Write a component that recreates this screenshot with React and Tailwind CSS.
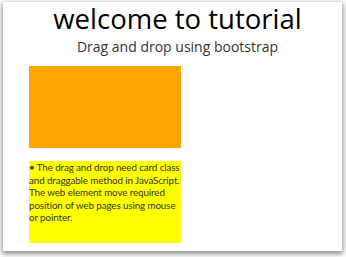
export default function App() {
  return (
    <div className="w-[346px] h-[257px] bg-white overflow-hidden">
      <div
        className="ml-[3px] mt-[2px] w-[339px] h-[249px] bg-white shadow-[0_2px_5px_1px_rgba(0,0,0,0.45)]"
        style={{ fontFamily: '"Open Sans", sans-serif' }}
      >
        <div className="pl-[10px] text-center">
          <h1 className="text-[27.5px] leading-[34px] text-black">welcome to tutorial</h1>
          <p className="mt-[1px] text-[14px] leading-[20px] text-[#333]">
            Drag and drop using bootstrap
          </p>
        </div>
        <div className="ml-[26px] mt-[9px] w-[152px]">
          <div className="h-[82px] bg-[#ffa500]" draggable="true" />
          <div className="mt-[13px] h-[82px] bg-[#ffff00] font-['Lato',sans-serif] text-[9.8px] leading-[12.6px] tracking-[-0.1px] text-[#333] whitespace-nowrap">
            • The drag and drop need card class
            <br />
            and draggable method in JavaScript.
            <br />
            The web element move required
            <br />
            position of web pages using mouse
            <br />
            or pointer.
          </div>
        </div>
      </div>
    </div>
  );
}
